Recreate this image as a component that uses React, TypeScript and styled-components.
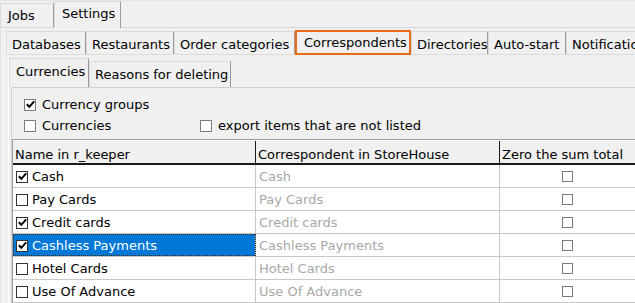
import styled, { createGlobalStyle } from 'styled-components'

const GlobalStyle = createGlobalStyle`
  html, body {
    margin: 0;
    padding: 0;
    background: #f0f0f0;
  }
  * {
    box-sizing: border-box;
  }
`

type Row = {
  name: string
  checked: boolean
  selected?: boolean
}

const rows: Row[] = [
  { name: 'Cash', checked: true },
  { name: 'Pay Cards', checked: false },
  { name: 'Credit cards', checked: true },
  { name: 'Cashless Payments', checked: true, selected: true },
  { name: 'Hotel Cards', checked: false },
  { name: 'Use Of Advance', checked: false },
]

const subTabs = [
  { label: 'Databases', width: 80 },
  { label: 'Restaurants', width: 88 },
  { label: 'Order categories', width: 121 },
  { label: 'Correspondents', width: 116, active: true },
  { label: 'Directories', width: 77 },
  { label: 'Auto-start', width: 78 },
  { label: 'Notifications', width: 100 },
]

function Check({ checked, $tone = 'dark', size = 12 }: { checked: boolean; $tone?: 'dark' | 'light'; size?: number }) {
  return (
    <Box $tone={$tone} $size={size}>
      {checked ? (
        <svg width="9" height="9" viewBox="0 0 9 9">
          <path d="M0.8 4.2 L3.3 6.8 L8.2 1.4" fill="none" stroke="#000" strokeWidth="2" />
        </svg>
      ) : null}
    </Box>
  )
}

export default function App() {
  return (
    <Window>
      <GlobalStyle />
      <MainStrip>
        <MainTab $width={54}>Jobs</MainTab>
        <MainTab $width={67} $active>Settings</MainTab>
      </MainStrip>
      <MainPanel>
        <SubStrip>
          {subTabs.map((t) => (
            <SubTab key={t.label} $width={t.width} $active={t.active}>
              {t.label}
            </SubTab>
          ))}
        </SubStrip>
        <SubPanel>
          <InnerStrip>
            <InnerTab $width={80} $active>Currencies</InnerTab>
            <InnerTab $width={142}>Reasons for deleting</InnerTab>
          </InnerStrip>
          <InnerPanel>
            <Options>
              <OptionLine>
                <Option>
                  <Check checked $tone="light" size={12} />
                  Currency groups
                </Option>
              </OptionLine>
              <OptionLine>
                <Option $width={176}>
                  <Check checked={false} $tone="light" size={12} />
                  Currencies
                </Option>
                <Option>
                  <Check checked={false} $tone="light" size={12} />
                  export items that are not listed
                </Option>
              </OptionLine>
            </Options>
            <Grid>
              <HeaderRow>
                <HeaderCell>Name in r_keeper</HeaderCell>
                <HeaderCell>Correspondent in StoreHouse</HeaderCell>
                <HeaderCell>Zero the sum total</HeaderCell>
              </HeaderRow>
              {rows.map((r) => (
                <BodyRow key={r.name}>
                  <NameCell $selected={r.selected}>
                    <Check checked={r.checked} />
                    {r.name}
                  </NameCell>
                  <CorrCell>{r.name}</CorrCell>
                  <ZeroCell>
                    <Check checked={false} $tone="light" size={11} />
                  </ZeroCell>
                </BodyRow>
              ))}
            </Grid>
          </InnerPanel>
        </SubPanel>
      </MainPanel>
    </Window>
  )
}

const Window = styled.div`
  width: 635px;
  height: 303px;
  overflow: hidden;
  background: #f0f0f0;
  border-top: 1px solid #dde7f2;
  font-family: 'DejaVu Sans', Tahoma, sans-serif;
  font-size: 13px;
  color: #000;
`

const MainStrip = styled.div`
  display: flex;
  align-items: flex-end;
  height: 27px;
  border-bottom: 1px solid #d6d6d6;
`

const MainTab = styled.div<{ $width: number; $active?: boolean }>`
  width: ${(p) => p.$width}px;
  height: ${(p) => (p.$active ? 27 : 24)}px;
  margin-bottom: ${(p) => (p.$active ? -1 : 0)}px;
  padding-left: 7px;
  padding-bottom: ${(p) => (p.$active ? 4 : 1)}px;
  display: flex;
  align-items: center;
  background: #f0f0f0;
  border-top: 1px solid #dadada;
  border-left: 1px solid #dadada;
  border-right: 1px solid #9a9a9a;
  position: relative;
  white-space: nowrap;
`

const MainPanel = styled.div`
  border-left: 1px solid #e2e2e2;
  padding-left: 5px;
  height: 276px;
`

const SubStrip = styled.div`
  display: flex;
  align-items: flex-end;
  height: 27px;
  border-bottom: 1px solid #dcdcdc;
`

const SubTab = styled.div<{ $width: number; $active?: boolean }>`
  flex: none;
  width: ${(p) => p.$width}px;
  height: ${(p) => (p.$active ? 25 : 23)}px;
  padding-left: ${(p) => (p.$active ? 7 : 5)}px;
  padding-top: 2px;
  display: flex;
  align-items: center;
  white-space: nowrap;
  overflow: hidden;
  background: #f0f0f0;
  border-top: 1px solid #dadada;
  border-left: 1px solid #dadada;
  border-right: 1px solid #9a9a9a;
  ${(p) =>
    p.$active &&
    `
    border: 2px solid #ec6b17;
    margin-bottom: -1px;
    padding-top: 0;
  `}
`

const SubPanel = styled.div`
  margin-left: 2px;
  border-left: 1px solid #ffffff;
  height: 250px;
`

const InnerStrip = styled.div`
  display: flex;
  align-items: flex-end;
  height: 32px;
`

const InnerTab = styled.div<{ $width: number; $active?: boolean }>`
  width: ${(p) => p.$width}px;
  height: ${(p) => (p.$active ? 29 : 26)}px;
  padding-left: ${(p) => (p.$active ? 6 : 5)}px;
  padding-bottom: ${(p) => (p.$active ? 4 : 0)}px;
  display: flex;
  align-items: center;
  white-space: nowrap;
  background: #f0f0f0;
  border-top: 1px solid #dadada;
  border-left: 1px solid #dadada;
  border-right: 1px solid #9a9a9a;
`

const InnerPanel = styled.div`
  margin-left: 2px;
  border-top: 1px solid #d0d0d0;
  border-left: 1px solid #d0d0d0;
  height: 220px;
`

const Options = styled.div`
  height: 51px;
  padding: 6px 0 0 12px;
  display: flex;
  flex-direction: column;
`

const OptionLine = styled.div`
  display: flex;
  height: 21px;
  align-items: center;
`

const Option = styled.div<{ $width?: number }>`
  display: flex;
  align-items: center;
  gap: 6px;
  width: ${(p) => (p.$width ? `${p.$width}px` : 'auto')};
  white-space: nowrap;
`

const Box = styled.span<{ $tone: 'dark' | 'light'; $size: number }>`
  flex: none;
  width: ${(p) => p.$size}px;
  height: ${(p) => p.$size}px;
  display: inline-flex;
  align-items: center;
  justify-content: center;
  background: #ffffff;
  border: 1px solid ${(p) => (p.$tone === 'dark' ? '#333333' : '#7a7a7a')};
`

const Grid = styled.div`
  border-top: 1px solid #a0a0a0;
  border-left: 1px solid #a0a0a0;
  width: 640px;
`

const columns = `243px 244px 150px`

const HeaderRow = styled.div`
  display: grid;
  grid-template-columns: ${columns};
  height: 25px;
  border-bottom: 2px solid #1a1a1a;
  border-top: 1px solid #ffffff;
`

const HeaderCell = styled.div`
  display: flex;
  align-items: center;
  padding: 4px 0 0 2px;
  border-right: 1px solid #1a1a1a;
  white-space: nowrap;
  overflow: hidden;
`

const BodyRow = styled.div`
  display: grid;
  grid-template-columns: ${columns};
  height: 23px;
  background: #ffffff;
  border-bottom: 1px solid #c8c8c8;
`

const NameCell = styled.div<{ $selected?: boolean }>`
  display: flex;
  align-items: center;
  gap: 4px;
  padding: 1px 0 0 3px;
  border-right: 1px solid #c8c8c8;
  white-space: nowrap;
  background: ${(p) => (p.$selected ? '#0078d7' : '#ffffff')};
  color: ${(p) => (p.$selected ? '#ffffff' : '#000000')};
  outline: ${(p) => (p.$selected ? '1px dotted #3a2a10' : 'none')};
  outline-offset: -1px;
`

const CorrCell = styled.div`
  display: flex;
  align-items: center;
  padding: 1px 0 0 3px;
  color: #a8a8a8;
  border-right: 1px solid #c8c8c8;
  white-space: nowrap;
`

const ZeroCell = styled.div`
  display: flex;
  align-items: center;
  padding-left: 62px;
`
